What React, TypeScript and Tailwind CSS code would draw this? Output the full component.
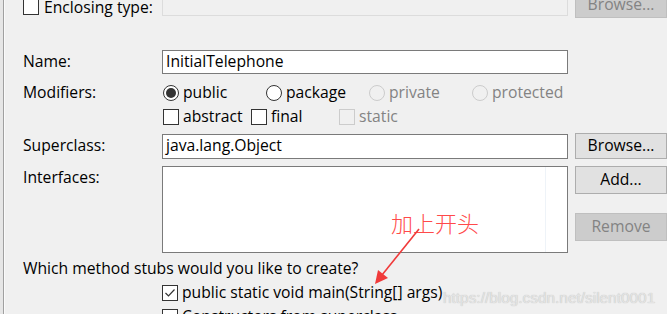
import React from "react";

const font = { fontFamily: '"Open Sans", "Noto Sans", sans-serif' };

function Checkbox({ checked = false, disabled = false }: { checked?: boolean; disabled?: boolean }) {
  return (
    <span
      className={`inline-flex h-[16px] w-[16px] shrink-0 items-center justify-center border ${
        disabled ? "border-[#cccccc] bg-[#f0f0f0]" : "border-[#333333] bg-white"
      }`}
    >
      {checked && (
        <svg width="12" height="12" viewBox="0 0 12 12">
          <path d="M1.5 6 L4.5 9 L10.5 2.5" fill="none" stroke="#333" strokeWidth="1.2" />
        </svg>
      )}
    </span>
  );
}

function Radio({ checked = false, disabled = false }: { checked?: boolean; disabled?: boolean }) {
  return (
    <span
      className={`inline-flex h-[16px] w-[16px] shrink-0 items-center justify-center rounded-full border ${
        disabled ? "border-[#cccccc] bg-[#f0f0f0]" : "border-[#333333] bg-white"
      }`}
    >
      {checked && <span className="h-[10px] w-[10px] rounded-full bg-[#333333]" />}
    </span>
  );
}

function Button({ label, disabled = false, h = "h-[26px]" }: { label: string; disabled?: boolean; h?: string }) {
  return (
    <div
      className={`flex w-[92px] ${h} items-center justify-center border text-[15.7px] ${
        disabled ? "border-[#bfbfbf] bg-[#cccccc] text-[#838383]" : "border-[#adadad] bg-[#e1e1e1] text-black"
      }`}
    >
      {label}
    </div>
  );
}

export default function App() {
  return (
    <div className="relative h-[314px] w-[667px] overflow-hidden bg-[#f0f0f0] text-[15.7px] text-black" style={font}>
      <div className="flex h-full">
        <div className="w-[3px] shrink-0 bg-[#e6e6e6]" />
        <div className="w-[1px] shrink-0 bg-[#a0a0a0]" />
        <div className="w-[1px] shrink-0 bg-[#fafafa]" />
        <div className="flex flex-1 flex-col pl-[18px]">
          {/* Enclosing type row */}
          <div className="-mt-[8px] flex h-[26px] items-start">
            <div className="flex w-[139px] items-center gap-[5px] pt-[5px]">
              <Checkbox />
              <span className="leading-[20px]">Enclosing type:</span>
            </div>
            <div className="h-[24px] w-[406px] border border-[#dcdcdc]" />
            <div className="ml-[7px]">
              <Button label="Browse..." disabled />
            </div>
          </div>
          {/* separator */}
          <div className="mt-[15px] h-[1px] bg-[#a0a0a0]" />
          {/* Name */}
          <div className="mt-[17px] flex h-[24px] items-center">
            <span className="w-[139px]">Name:</span>
            <div className="flex h-[24px] w-[406px] items-center border border-[#7a7a7a] bg-white px-[3px]">
              InitialTelephone
            </div>
          </div>
          {/* Modifiers */}
          <div className="mt-[10px] flex h-[18px] items-center">
            <span className="w-[140px]">Modifiers:</span>
            <div className="flex w-[103px] items-center gap-[4px]">
              <Radio checked />
              <span>public</span>
            </div>
            <div className="flex w-[103px] items-center gap-[4px]">
              <Radio />
              <span>package</span>
            </div>
            <div className="flex w-[103px] items-center gap-[4px] text-[#838383]">
              <Radio disabled />
              <span>private</span>
            </div>
            <div className="flex items-center gap-[4px] text-[#838383]">
              <Radio disabled />
              <span>protected</span>
            </div>
          </div>
          {/* flags */}
          <div className="mt-[6px] flex h-[18px] items-center">
            <span className="w-[140px]" />
            <div className="flex w-[88px] items-center gap-[4px]">
              <Checkbox />
              <span>abstract</span>
            </div>
            <div className="flex w-[88px] items-center gap-[4px]">
              <Checkbox />
              <span>final</span>
            </div>
            <div className="flex items-center gap-[4px] text-[#838383]">
              <Checkbox disabled />
              <span>static</span>
            </div>
          </div>
          {/* Superclass */}
          <div className="mt-[7px] flex h-[26px] items-center">
            <span className="w-[139px]">Superclass:</span>
            <div className="flex h-[25px] w-[406px] items-center border border-[#7a7a7a] bg-white px-[3px]">
              java.lang.Object
            </div>
            <div className="ml-[7px]">
              <Button label="Browse..." />
            </div>
          </div>
          {/* Interfaces */}
          <div className="mt-[7px] flex">
            <span className="w-[139px] leading-[22px]">Interfaces:</span>
            <div className="flex h-[87px] w-[406px] justify-end border border-[#7a7a7a] bg-white pr-[21px]">
              <div className="w-[1px] bg-[#eef3f8]" />
            </div>
            <div className="ml-[7px] flex flex-col gap-[19px]">
              <Button label="Add..." h="h-[28px]" />
              <Button label="Remove" disabled h="h-[28px]" />
            </div>
          </div>
          {/* Which */}
          <div className="mt-[4px] leading-[22px]">Which method stubs would you like to create?</div>
          <div className="mt-[5px] flex h-[18px] items-center pl-[139px]">
            <div className="flex items-center gap-[4px]">
              <Checkbox checked />
              <span>public static void main(String[] args)</span>
            </div>
          </div>
          <div className="mt-[6px] flex h-[18px] items-center pl-[139px]">
            <div className="flex items-center gap-[4px]">
              <Checkbox />
              <span>Constructors from superclass</span>
            </div>
          </div>
        </div>
      </div>

      {/* annotation */}
      <div
        className="absolute left-[391px] top-[207px] text-[22px] leading-[30px] text-[#ff4a4a]"
        style={{ fontFamily: '"Noto Sans CJK SC", sans-serif', fontWeight: 300 }}
      >
        加上开头
      </div>
      <svg className="absolute left-0 top-0" width="667" height="314" viewBox="0 0 667 314">
        <line x1="419" y1="229" x2="382" y2="275" stroke="#f03a3a" strokeWidth="1.6" />
        <polygon points="375,284 378,270 388,278" fill="#f03a3a" />
      </svg>
      <div
        className="absolute left-[443px] top-[287px] text-[15.4px] leading-[22px] text-[#e4e4e4]"
        style={{ fontFamily: '"Liberation Sans", Arial, sans-serif', textShadow: "0 0 1px #b5b5b5" }}
      >
        https://blog.csdn.net/silent0001
      </div>
    </div>
  );
}
